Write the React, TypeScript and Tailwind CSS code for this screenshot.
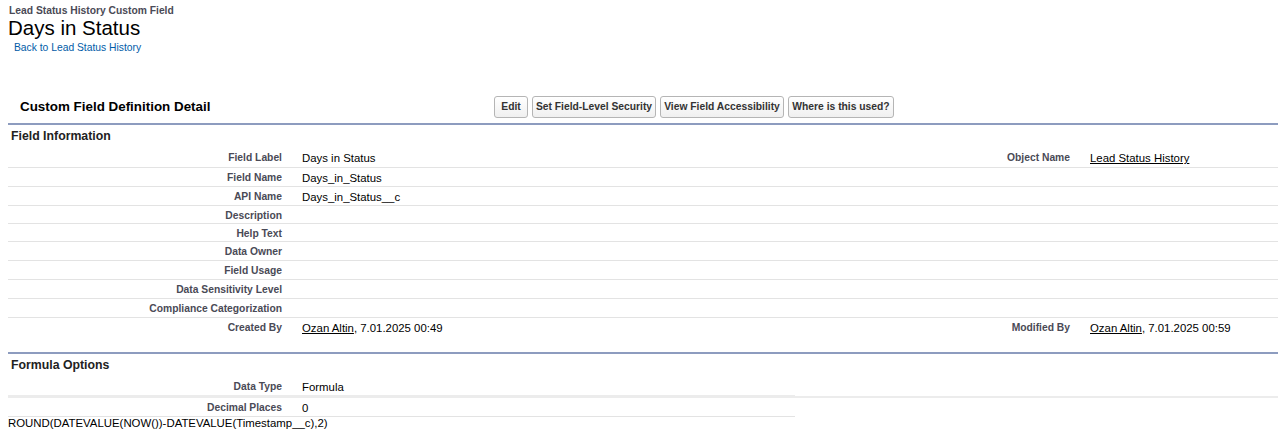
import React from "react";

type Row = {
  label: string;
  value?: React.ReactNode;
  label2?: string;
  value2?: React.ReactNode;
  h: string;
  border?: boolean;
};

const Link = ({ children }: { children: React.ReactNode }) => (
  <span className="underline text-black">{children}</span>
);

const rows: Row[] = [
  { label: "Field Label", value: "Days in Status", label2: "Object Name", value2: <Link>Lead Status History</Link>, h: "h-[20px]", border: true },
  { label: "Field Name", value: "Days_in_Status", h: "h-[19px]", border: true },
  { label: "API Name", value: "Days_in_Status__c", h: "h-[19px]", border: true },
  { label: "Description", h: "h-[18px]", border: true },
  { label: "Help Text", h: "h-[18px]", border: true },
  { label: "Data Owner", h: "h-[19px]", border: true },
  { label: "Field Usage", h: "h-[19px]", border: true },
  { label: "Data Sensitivity Level", h: "h-[19px]", border: true },
  { label: "Compliance Categorization", h: "h-[19px]", border: true },
  {
    label: "Created By",
    value: (
      <>
        <Link>Ozan Altin</Link>, 7.01.2025 00:49
      </>
    ),
    label2: "Modified By",
    value2: (
      <>
        <Link>Ozan Altin</Link>, 7.01.2025 00:59
      </>
    ),
    h: "h-[34px]",
    border: false,
  },
];

function DetailRow({ r }: { r: Row }) {
  return (
    <div
      className={`grid grid-cols-[284px_588px_200px_198px] ${r.h} ${
        r.border ? "border-b border-[#e3e3e3]" : ""
      }`}
    >
      <div className="pr-[10px] pt-[3px] text-right text-[10.3px] leading-[13px] font-bold text-[#4a4a56]">
        {r.label}
      </div>
      <div className="pl-[10px] pt-[3px] text-[11.4px] leading-[14px] text-black">{r.value}</div>
      <div className="pr-[10px] pt-[3px] text-right text-[10.3px] leading-[13px] font-bold text-[#4a4a56]">
        {r.label2}
      </div>
      <div className="pl-[10px] pt-[3px] text-[11.4px] leading-[14px] text-black">{r.value2}</div>
    </div>
  );
}

const Btn = ({ w, children }: { w: string; children: React.ReactNode }) => (
  <div
    className={`${w} h-[22px] flex items-center justify-center rounded-[3px] border border-[#b5b5b5] bg-gradient-to-b from-white to-[#f0f0f0] text-[10.3px] font-bold text-[#333]`}
  >
    {children}
  </div>
);

export default function App() {
  return (
    <div
      className="w-[1278px] h-[441px] overflow-hidden bg-white"
      style={{ fontFamily: '"Liberation Sans", Arial, sans-serif' }}
    >
      {/* page header */}
      <div className="pl-[8px] pt-[5px]">
        <div className="ml-[1px] text-[10.3px] leading-[12px] font-bold text-[#4a4a56]">
          Lead Status History Custom Field
        </div>
        <div className="text-[20.5px] leading-[22px] text-black">Days in Status</div>
        <div className="ml-[6px] mt-[3px] text-[10.3px] leading-[12px] text-[#015ba7]">
          Back to Lead Status History
        </div>
      </div>

      {/* block header */}
      <div className="ml-[8px] mt-[42px] w-[1270px] flex h-[27px]">
        <div className="w-[486px] pl-[12px] h-[22px] flex items-center text-[13.4px] font-bold text-black">
          Custom Field Definition Detail
        </div>
        <div className="flex gap-[4px]">
          <Btn w="w-[34px]">Edit</Btn>
          <Btn w="w-[124px]">Set Field-Level Security</Btn>
          <Btn w="w-[124px]">View Field Accessibility</Btn>
          <Btn w="w-[106px]">Where is this used?</Btn>
        </div>
      </div>

      {/* Field Information */}
      <div className="ml-[8px] w-[1270px]">
        <div className="border-t-2 border-[#8d9cbf] h-[25px] flex items-center pl-[3px] text-[12.3px] font-bold text-[#222]">
          Field Information
        </div>
        {rows.map((r) => (
          <DetailRow key={r.label} r={r} />
        ))}

        {/* Formula Options */}
        <div className="border-t-2 border-[#8d9cbf] h-[25px] flex items-center pl-[3px] text-[12.3px] font-bold text-[#222]">
          Formula Options
        </div>
        <div className="grid grid-cols-[284px_588px_200px_198px] h-[18px]">
          <div className="pr-[10px] pt-[3px] text-right text-[10.3px] leading-[13px] font-bold text-[#4a4a56]">
            Data Type
          </div>
          <div className="pl-[10px] pt-[3px] text-[11.4px] leading-[14px] text-black">Formula</div>
        </div>
        <div className="flex h-[3px]">
          <div className="w-[787px] h-[3px] bg-[#ececec]" />
          <div className="flex-1 mt-[1px] h-[2px] bg-[#ececec]" />
        </div>
        <div className="w-[787px] h-[19px] border-b border-[#e3e3e3] flex">
          <div className="w-[284px] pr-[10px] pt-[3px] text-right text-[10.3px] leading-[13px] font-bold text-[#4a4a56]">
            Decimal Places
          </div>
          <div className="pl-[10px] pt-[3px] text-[11.4px] leading-[14px] text-black">0</div>
        </div>
      </div>
      <div className="ml-[8px] text-[11.4px] leading-[13px] text-black">
        ROUND(DATEVALUE(NOW())-DATEVALUE(Timestamp__c),2)
      </div>
    </div>
  );
}
